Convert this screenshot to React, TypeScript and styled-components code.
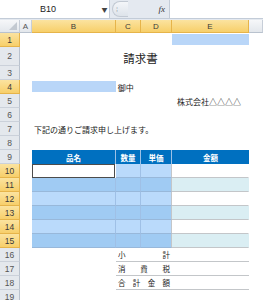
import React from 'react'
import styled, { createGlobalStyle, css } from 'styled-components'

const GlobalStyle = createGlobalStyle`
  html, body {
    margin: 0;
    padding: 0;
    background: #fff;
    overflow: hidden;
  }
  body {
    font-family: "Noto Sans CJK JP", "Liberation Sans", sans-serif;
    color: #222;
  }
`

const COLS = '20px 12px 84px 25px 31px 77px 1fr'

const Window = styled.div`
  width: 263px;
  height: 300px;
  overflow: hidden;
`

const FormulaBar = styled.div`
  display: flex;
  height: 18px;
  background: #e4e9f0;
  border-bottom: 1px solid #c3ccd8;
`

const NameBox = styled.div`
  width: 100px;
  display: flex;
  align-items: center;
  padding-left: 40px;
  box-sizing: border-box;
  background: #fff;
  font-family: "Liberation Sans", sans-serif;
  font-size: 9px;
  color: #222;
`

const Drop = styled.div`
  width: 9px;
  background: #fff;
  border-right: 1px solid #c3ccd8;
  display: flex;
  align-items: center;
  justify-content: center;
  font-size: 6px;
  color: #444;
`

const Splitter = styled.div`
  margin: 1px 0 1px 2px;
  width: 16px;
  border: 1px solid #c2c9d3;
  border-right: none;
  border-radius: 8px 0 0 8px;
  background: linear-gradient(#f4f6f9, #dde3ea);
  display: flex;
  align-items: center;
  padding-left: 3px;
  box-sizing: border-box;
  font-size: 7px;
  color: #9aa3ae;
`

const FxZone = styled.div`
  width: 41px;
  display: flex;
  align-items: center;
  justify-content: flex-end;
  padding-right: 4px;
  box-sizing: border-box;
  font-family: "Liberation Serif", serif;
  font-style: italic;
  font-size: 9px;
  color: #333;
`

const Input = styled.div`
  flex: 1;
  background: #fff;
  border-left: 1px solid #c3ccd8;
`

const Gap = styled.div`
  height: 1px;
  background: #e4e9f0;
`

const Row = styled.div<{ $h: number }>`
  display: grid;
  grid-template-columns: ${COLS};
  height: ${p => p.$h}px;
`

const headerLook = css<{ $on?: boolean }>`
  background: ${p => (p.$on ? 'linear-gradient(#fbe3a0, #f7cf6a)' : 'linear-gradient(#f6f7f9, #e3e7ec)')};
  color: ${p => (p.$on ? '#3a3a3a' : '#555')};
  font-family: "Liberation Sans", sans-serif;
  font-size: 8px;
  display: flex;
  align-items: center;
  justify-content: center;
  box-sizing: border-box;
`

const ColHead = styled.div<{ $on?: boolean }>`
  ${headerLook}
  border-right: 1px solid ${p => (p.$on ? '#e6b44a' : '#c7ced8')};
  border-bottom: 1px solid ${p => (p.$on ? '#e6b44a' : '#b9c2ce')};
`

const Corner = styled.div`
  background: linear-gradient(#f6f7f9, #e3e7ec);
  border-right: 1px solid #c7ced8;
  border-bottom: 1px solid #b9c2ce;
  position: relative;
  &::after {
    content: '';
    position: absolute;
    right: 2px;
    bottom: 2px;
    border-left: 8px solid transparent;
    border-bottom: 8px solid #c3c9d1;
  }
`

const RowHead = styled.div<{ $on?: boolean }>`
  ${headerLook}
  background: ${p => (p.$on ? 'linear-gradient(#fbe3a0, #f7cf6a)' : '#e4e8ed')};
  border-right: 1px solid ${p => (p.$on ? '#e6b44a' : '#b9c2ce')};
  border-bottom: 1px solid ${p => (p.$on ? '#e6b44a' : '#cbd1da')};
  font-size: 8.5px;
`

const Cell = styled.div<{ $span?: number; $bg?: string; $align?: string }>`
  grid-column: span ${p => p.$span ?? 1};
  background: ${p => p.$bg ?? '#fff'};
  display: flex;
  align-items: center;
  justify-content: ${p => p.$align ?? 'flex-start'};
  font-size: 8px;
  white-space: nowrap;
  box-sizing: border-box;
  overflow: visible;
`

const Title = styled(Cell)`
  font-size: 11.5px;
  justify-content: center;
  padding-top: 3px;
`

const Pick = styled(Cell)`
  background: #b9d6f8;
  margin: 1px 0 2px;
`

const TableHead = styled(Cell)<{ $last?: boolean }>`
  background: #0070c0;
  color: #fff;
  font-weight: bold;
  font-size: 7.5px;
  justify-content: center;
  border-right: ${p => (p.$last ? 'none' : '1px solid #9cc1e6')};
`

const Body = styled(Cell)<{ $sel?: boolean; $odd?: boolean; $edge?: boolean }>`
  background: ${p => (p.$sel ? (p.$odd ? '#a0cbf3' : '#badafb') : p.$odd ? '#daeef3' : '#fff')};
  border-bottom: 1px solid ${p => (p.$sel ? '#98b8da' : '#c3c6c9')};
  border-right: 1px solid ${p => (p.$sel ? (p.$edge ? '#c3c6c9' : '#9fc0e6') : 'transparent')};
`

const Active = styled(Cell)`
  background: #fff;
  border: 1.5px solid #4c4c4c;
  margin-right: 1px;
`

const Total = styled(Cell)<{ $line?: boolean }>`
  justify-content: space-between;
  padding: 0 2px 0 2px;
  font-size: 7.5px;
  letter-spacing: 0;
  border-bottom: 1px solid #c3c6c9;
`

const TotalLine = styled(Cell)`
  border-bottom: 1px solid #c3c6c9;
`

const Chars = ({ text }: { text: string }) => (
  <>
    {text.split('').map((c, i) => (
      <span key={i}>{c}</span>
    ))}
  </>
)

const selRows = [1, 4, 10, 11, 12, 13, 14, 15]

function Head({ n }: { n: number }) {
  return <RowHead $on={selRows.includes(n)}>{n}</RowHead>
}

const Empty = ({ span = 1 }: { span?: number }) => <Cell $span={span} />

export default function App() {
  const bodyRows = [10, 11, 12, 13, 14, 15]
  return (
    <Window>
      <GlobalStyle />
      <FormulaBar>
        <NameBox>B10</NameBox>
        <Drop>▼</Drop>
        <Splitter>⁞</Splitter>
        <FxZone>fx</FxZone>
        <Input />
      </FormulaBar>
      <Gap />
      <Row $h={13}>
        <Corner />
        <ColHead>A</ColHead>
        <ColHead $on>B</ColHead>
        <ColHead $on>C</ColHead>
        <ColHead $on>D</ColHead>
        <ColHead $on>E</ColHead>
        <ColHead />
      </Row>

      <Row $h={14}>
        <Head n={1} />
        <Empty span={4} />
        <Pick />
        <Empty />
      </Row>
      <Row $h={19}>
        <Head n={2} />
        <Empty />
        <Title $span={4}>請求書</Title>
        <Empty />
      </Row>
      <Row $h={14}>
        <Head n={3} />
        <Empty span={6} />
      </Row>
      <Row $h={14}>
        <Head n={4} />
        <Empty />
        <Pick />
        <Cell $span={2}>&nbsp;御中</Cell>
        <Empty span={2} />
      </Row>
      <Row $h={14}>
        <Head n={5} />
        <Empty span={4} />
        <Cell $align="flex-end" style={{ paddingRight: 8 }}>株式会社△△△△</Cell>
        <Empty />
      </Row>
      <Row $h={14}>
        <Head n={6} />
        <Empty span={6} />
      </Row>
      <Row $h={14}>
        <Head n={7} />
        <Empty />
        <Cell $span={4} style={{ paddingLeft: 2 }}>下記の通りご請求申し上げます。</Cell>
        <Empty />
      </Row>
      <Row $h={14}>
        <Head n={8} />
        <Empty span={6} />
      </Row>
      <Row $h={14}>
        <Head n={9} />
        <Empty />
        <TableHead>品名</TableHead>
        <TableHead>数量</TableHead>
        <TableHead>単価</TableHead>
        <TableHead $last>金額</TableHead>
        <Empty />
      </Row>
      {bodyRows.map(n => {
        const odd = n % 2 === 1
        return (
          <Row $h={14} key={n}>
            <Head n={n} />
            <Empty />
            {n === 10 ? <Active /> : <Body $sel $odd={odd} />}
            <Body $sel $odd={odd} />
            <Body $sel $odd={odd} $edge />
            <Body $odd={odd} />
            <Empty />
          </Row>
        )
      })}
      {['小計', '消費税', '合計金額'].map((t, i) => (
        <Row $h={14} key={t}>
          <Head n={16 + i} />
          <Empty span={2} />
          <Total $span={2}>
            <Chars text={t} />
          </Total>
          <TotalLine />
          <Empty />
        </Row>
      ))}
      <Row $h={14}>
        <Head n={19} />
        <Empty span={6} />
      </Row>
    </Window>
  )
}
